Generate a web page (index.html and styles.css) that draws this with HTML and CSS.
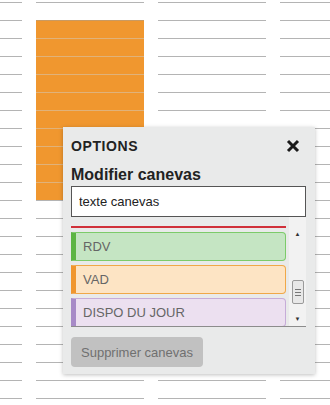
FILE: index.html
```html
<!DOCTYPE html>
<html lang="fr">

<head>
  <meta charset="UTF-8">
  <meta name="viewport" content="width=device-width, initial-scale=1.0">
  <title>Options canevas</title>
  <link rel="stylesheet" href="styles.css">
</head>

<body class="page">
  <div class="planning">
    <div class="day day-narrow">
      <div class="slot"></div><div class="slot"></div><div class="slot"></div><div class="slot"></div>
      <div class="slot"></div><div class="slot"></div><div class="slot"></div><div class="slot"></div>
      <div class="slot"></div><div class="slot"></div><div class="slot"></div><div class="slot"></div>
      <div class="slot"></div><div class="slot"></div><div class="slot"></div><div class="slot"></div>
      <div class="slot"></div><div class="slot"></div><div class="slot"></div><div class="slot"></div>
      <div class="slot"></div><div class="slot"></div><div class="slot"></div>
    </div>
    <div class="day">
      <div class="slot"></div>
      <div class="slot busy"></div><div class="slot busy"></div><div class="slot busy"></div><div class="slot busy"></div>
      <div class="slot busy"></div><div class="slot busy"></div><div class="slot busy"></div><div class="slot busy"></div>
      <div class="slot busy"></div><div class="slot busy"></div>
      <div class="slot"></div><div class="slot"></div><div class="slot"></div><div class="slot"></div>
      <div class="slot"></div><div class="slot"></div><div class="slot"></div><div class="slot"></div>
      <div class="slot"></div><div class="slot"></div><div class="slot"></div><div class="slot"></div>
    </div>
    <div class="day">
      <div class="slot"></div><div class="slot"></div><div class="slot"></div><div class="slot"></div>
      <div class="slot"></div><div class="slot"></div><div class="slot"></div><div class="slot"></div>
      <div class="slot"></div><div class="slot"></div><div class="slot"></div><div class="slot"></div>
      <div class="slot"></div><div class="slot"></div><div class="slot"></div><div class="slot"></div>
      <div class="slot"></div><div class="slot"></div><div class="slot"></div><div class="slot"></div>
      <div class="slot"></div><div class="slot"></div><div class="slot"></div>
    </div>
    <div class="day day-last">
      <div class="slot"></div><div class="slot"></div><div class="slot"></div><div class="slot"></div>
      <div class="slot"></div><div class="slot"></div><div class="slot"></div><div class="slot"></div>
      <div class="slot"></div><div class="slot"></div><div class="slot"></div><div class="slot"></div>
      <div class="slot"></div><div class="slot"></div><div class="slot"></div><div class="slot"></div>
      <div class="slot"></div><div class="slot"></div><div class="slot"></div><div class="slot"></div>
      <div class="slot"></div><div class="slot"></div><div class="slot"></div>
    </div>
  </div>

  <!-- popup options -->
  <div class="options-panel">
    <div class="options-head">
      <span class="options-title">OPTIONS</span>
      <svg class="options-close" width="14" height="14" viewBox="0 0 14 14">
        <path d="M2 2 L12 12 M12 2 L2 12" stroke="#1a1a1a" stroke-width="3" stroke-linecap="butt" />
      </svg>
    </div>
    <div class="options-subtitle">Modifier canevas</div>
    <input class="options-input" type="text" value="texte canevas">

    <div class="canevas-box">
      <div class="canevas-list">
        <div class="canevas-item canevas-cut"></div>
        <div class="canevas-item canevas-green">RDV</div>
        <div class="canevas-item canevas-orange">VAD</div>
        <div class="canevas-item canevas-purple">DISPO DU JOUR</div>
      </div>
      <div class="fake-scroll">
        <span class="scroll-arrow">&#9650;</span>
        <div class="scroll-track">
          <div class="scroll-thumb">
            <span></span><span></span><span></span>
          </div>
        </div>
        <span class="scroll-arrow">&#9660;</span>
      </div>
    </div>

    <button class="btn-delete" type="button">Supprimer canevas</button>
  </div>
</body>

</html>
```

FILE: styles.css
```css
.page {
  margin: 0;
  width: 330px;
  height: 405px;
  overflow: hidden;
  background-color: #fff;
  font-family: "Liberation Sans", Arial, sans-serif;
}

.planning {
  display: flex;
  gap: 14px;
  padding-top: 2px;
}

.day {
  width: 108px;
  flex-shrink: 0;
}

.day-narrow {
  width: 22px;
}

.day-last {
  width: 60px;
}

.slot {
  height: 18px;
  box-sizing: border-box;
  border-top: 1px solid #b4b4b4;
}

.slot.busy {
  background-color: #f0972f;
  border-top-color: #e0b27a;
}

.slot:not(.busy) + .slot.busy {
  border-top-color: #c99a62;
}

.options-panel {
  position: absolute;
  left: 63px;
  top: 127px;
  width: 252px;
  height: 247px;
  box-sizing: border-box;
  padding: 9px 9px 0 8px;
  background-color: #e9eaea;
  box-shadow: 0 1px 4px rgba(0, 0, 0, 0.25);
  color: #222;
}

.options-head {
  display: flex;
  justify-content: space-between;
  align-items: center;
  height: 20px;
}

.options-title {
  font-size: 14px;
  font-weight: bold;
  letter-spacing: 0.6px;
}

.options-close {
  margin-right: 6px;
}

.options-subtitle {
  margin-top: 10px;
  font-size: 16px;
  font-weight: bold;
  line-height: 18px;
}

.options-input {
  display: block;
  width: 235px;
  height: 31px;
  margin-top: 2px;
  box-sizing: border-box;
  border: 1px solid #555;
  padding: 0 7px;
  font-family: "Liberation Sans", Arial, sans-serif;
  font-size: 13px;
  color: #222;
  background-color: #fff;
}

.canevas-box {
  display: flex;
  width: 235px;
  height: 110px;
  box-sizing: border-box;
  border-bottom: 1px solid #8c8c8c;
  overflow: hidden;
}

.canevas-list {
  flex: 1;
  display: flex;
  flex-direction: column;
  gap: 4px;
  padding-right: 3px;
}

.canevas-item {
  height: 29px;
  flex-shrink: 0;
  box-sizing: border-box;
  border: 1px solid;
  border-left-width: 5px;
  border-radius: 0 4px 4px 0;
  padding-left: 7px;
  font-size: 13px;
  line-height: 27px;
  color: #666;
}

.canevas-cut {
  height: 11px;
  border: none;
  border-bottom: 2px solid #d0303a;
  border-radius: 0;
}

.canevas-green {
  background-color: #c5e5c3;
  border-color: #7ccb6a;
  border-left-color: #5cb543;
}

.canevas-orange {
  background-color: #fde4c4;
  border-color: #f0a848;
  border-left-color: #f0962e;
}

.canevas-purple {
  background-color: #ece0f0;
  border-color: #c6acd8;
  border-left-color: #a78ac7;
}

.fake-scroll {
  width: 17px;
  display: flex;
  flex-direction: column;
  align-items: center;
  padding-top: 6px;
  background-color: #f2f2f2;
}

.scroll-arrow {
  font-size: 6px;
  color: #333;
  height: 14px;
  line-height: 14px;
  margin-top: 4px;
}

.scroll-track {
  flex: 1;
  width: 100%;
  display: flex;
  flex-direction: column;
  justify-content: flex-end;
  align-items: center;
}

.scroll-thumb {
  width: 12px;
  height: 24px;
  margin-bottom: 4px;
  box-sizing: border-box;
  border: 1px solid #9a9a9a;
  border-radius: 2px;
  background-color: #e8e8e8;
  display: flex;
  flex-direction: column;
  justify-content: center;
  align-items: center;
  gap: 2px;
}

.scroll-thumb span {
  display: block;
  width: 6px;
  height: 1px;
  background-color: #777;
}

.btn-delete {
  margin-top: 10px;
  height: 30px;
  padding: 0 10px;
  border: none;
  border-radius: 4px;
  background-color: #c1c1c1;
  color: #707070;
  font-family: "Liberation Sans", Arial, sans-serif;
  font-size: 13px;
}
```
